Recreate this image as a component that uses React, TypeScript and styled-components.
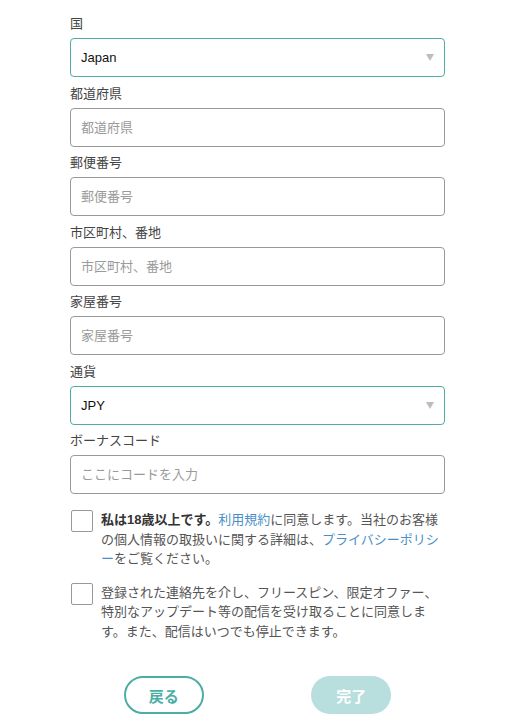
import React, { useState } from "react";
import styled, { createGlobalStyle } from "styled-components";

const GlobalStyle = createGlobalStyle`
  html, body {
    margin: 0;
    padding: 0;
    background: #ffffff;
  }
  body {
    font-family: "Liberation Sans", Arial, "Noto Sans CJK JP", sans-serif;
  }
  * {
    box-sizing: border-box;
  }
`;

const TEAL = "#4aaea5";

type Field = {
  label: string;
  kind: "select" | "input";
  value?: string;
  options?: string[];
  placeholder?: string;
};

const fields: Field[] = [
  { label: "国", kind: "select", value: "Japan", options: ["Japan"] },
  { label: "都道府県", kind: "input", placeholder: "都道府県" },
  { label: "郵便番号", kind: "input", placeholder: "郵便番号" },
  { label: "市区町村、番地", kind: "input", placeholder: "市区町村、番地" },
  { label: "家屋番号", kind: "input", placeholder: "家屋番号" },
  { label: "通貨", kind: "select", value: "JPY", options: ["JPY"] },
  { label: "ボーナスコード", kind: "input", placeholder: "ここにコードを入力" },
];

export default function App() {
  const [ageOk, setAgeOk] = useState(false);
  const [promo, setPromo] = useState(false);

  return (
    <>
      <GlobalStyle />
      <Page>
        <Form>
          {fields.map((f) => (
            <FieldBox key={f.label}>
              <Label>{f.label}</Label>
              {f.kind === "select" ? (
                <SelectWrap>
                  <Select defaultValue={f.value}>
                    {f.options!.map((o) => (
                      <option key={o}>{o}</option>
                    ))}
                  </Select>
                  <Arrow />
                </SelectWrap>
              ) : (
                <Input placeholder={f.placeholder} />
              )}
            </FieldBox>
          ))}

          <Checks>
            <CheckRow>
              <Box $checked={ageOk} onClick={() => setAgeOk(!ageOk)} />
              <CheckText>
                <strong>私は18歳以上です。</strong>
                <Link>利用規約</Link>に同意します。当社のお客様の個人情報の取扱いに関する詳細は、
                <Link>プライバシーポリシー</Link>をご覧ください。
              </CheckText>
            </CheckRow>
            <CheckRow>
              <Box $checked={promo} onClick={() => setPromo(!promo)} />
              <CheckText>
                登録された連絡先を介し、フリースピン、限定オファー、特別なアップデート等の配信を受け取ることに同意します。また、配信はいつでも停止できます。
              </CheckText>
            </CheckRow>
          </Checks>

          <Buttons>
            <Cell>
              <BackButton>戻る</BackButton>
            </Cell>
            <Cell>
              <DoneButton disabled>完了</DoneButton>
            </Cell>
          </Buttons>
        </Form>
      </Page>
    </>
  );
}

const Page = styled.div`
  width: 508px;
  padding: 14px 64px 10px 70px;
`;

const Form = styled.div`
  width: 375px;
  display: flex;
  flex-direction: column;
`;

const FieldBox = styled.div`
  display: flex;
  flex-direction: column;
  margin-bottom: 6.5px;
`;

const Label = styled.div`
  font-size: 13px;
  line-height: 20px;
  color: #444;
  margin-bottom: 4px;
`;

const controlBase = `
  width: 100%;
  height: 39px;
  border-radius: 4px;
  font-family: "Liberation Sans", Arial, "Noto Sans CJK JP", sans-serif;
  font-size: 13px;
  padding: 0 10px;
  background: #fff;
  outline: none;
`;

const Input = styled.input`
  ${controlBase}
  border: 1px solid #999;
  color: #222;
  &::placeholder {
    color: #9a9a9a;
  }
`;

const SelectWrap = styled.div`
  position: relative;
`;

const Select = styled.select`
  ${controlBase}
  appearance: none;
  border: 1px solid ${TEAL};
  color: #111;
`;

const Arrow = styled.span`
  position: absolute;
  right: 11px;
  top: 16px;
  width: 0;
  height: 0;
  border-left: 4.5px solid transparent;
  border-right: 4.5px solid transparent;
  border-top: 7px solid #bdbdbd;
  pointer-events: none;
`;

const Checks = styled.div`
  display: flex;
  flex-direction: column;
  gap: 14px;
  margin-top: 9.5px;
`;

const CheckRow = styled.div`
  display: flex;
  align-items: flex-start;
  gap: 8px;
  padding-left: 1px;
`;

const Box = styled.div<{ $checked: boolean }>`
  flex: none;
  width: 22px;
  height: 22px;
  border: 1px solid #999;
  border-radius: 2px;
  background: ${(p) => (p.$checked ? TEAL : "#fff")};
  cursor: pointer;
`;

const CheckText = styled.div`
  font-size: 13px;
  line-height: 19.5px;
  color: #555;
  strong {
    color: #333;
    font-weight: 700;
  }
`;

const Link = styled.a`
  color: #4a8fc7;
  text-decoration: none;
  cursor: pointer;
`;

const Buttons = styled.div`
  display: grid;
  grid-template-columns: 1fr 1fr;
  margin-top: 35px;
`;

const Cell = styled.div`
  display: flex;
  justify-content: center;
`;

const buttonBase = `
  width: 80px;
  height: 38px;
  border-radius: 19px;
  font-family: "Liberation Sans", Arial, "Noto Sans CJK JP", sans-serif;
  font-size: 15px;
  font-weight: 700;
`;

const BackButton = styled.button`
  ${buttonBase}
  background: #fff;
  border: 2px solid ${TEAL};
  color: ${TEAL};
  cursor: pointer;
`;

const DoneButton = styled.button`
  ${buttonBase}
  background: #b8dedd;
  border: none;
  color: #fff;
`;
